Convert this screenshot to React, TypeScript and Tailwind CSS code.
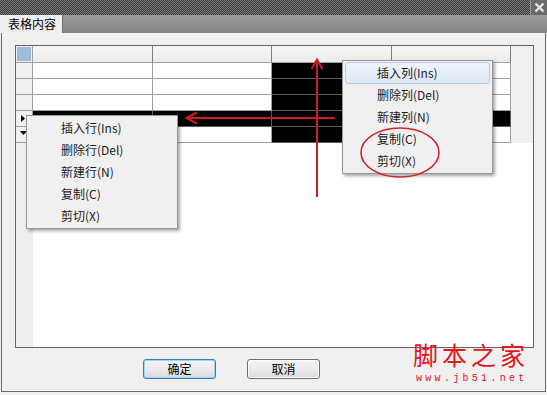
import React from 'react';

const cn = '"Noto Sans CJK SC", "Liberation Sans", sans-serif';

// column widths of the grid, each includes its right border line
const colW = ['w-[120px]', 'w-[119px]', 'w-[120px]', 'w-[119px]'];
const rows = [0, 1, 2, 3, 4];
const selRow = 3;
const selCol = 2;

function RowMarker({ row }: { row: number }) {
  if (row === 3) {
    return (
      <svg width="5" height="7" viewBox="0 0 5 7" className="ml-[5px] mt-[4px]">
        <path d="M0 0 L4 3.5 L0 7 Z" fill="#000" />
      </svg>
    );
  }
  if (row === 4) {
    return (
      <svg width="7" height="5" viewBox="0 0 7 5" className="ml-[4px] mt-[4px]">
        <path d="M0 0 L7 0 L3.5 4 Z" fill="#000" />
      </svg>
    );
  }
  return null;
}

function Grid() {
  return (
    <div className="ml-[13px] w-[519px] h-[303px] border border-[#646464] bg-white flex flex-col">
      {/* header */}
      <div className="flex h-[17px] shrink-0">
        <div className="w-[17px] h-full border-r border-b border-[#a0a0a0] bg-[#f0f0f0] pl-px pt-px">
          <div className="w-[14px] h-[14px] bg-[#9cbcdb]" />
        </div>
        {colW.map((w, i) => (
          <div
            key={i}
            className={`${w} h-full border-r border-b border-r-[#7c7c7c] border-b-[#a0a0a0] bg-gradient-to-b from-[#f7f7f7] to-[#ebebeb]`}
          />
        ))}
        <div className="flex-1 h-full bg-[#f0f0f0]" />
      </div>
      {/* rows */}
      {rows.map((r) => (
        <div key={r} className="flex h-[16px] shrink-0">
          <div className="w-[17px] h-full border-r border-b border-[#a0a0a0] bg-[#f0f0f0]">
            <RowMarker row={r} />
          </div>
          {colW.map((w, c) => {
            const sel = r === selRow || c === selCol;
            return (
              <div
                key={c}
                className={`${w} h-full border-r border-b ${sel ? 'bg-black border-[#5c5c5c]' : 'bg-white border-[#a0a0a0]'}`}
              />
            );
          })}
          <div className="flex-1 h-full bg-[#f0f0f0]" />
        </div>
      ))}
      {/* empty area below rows */}
      <div className="flex flex-1">
        <div className="w-[17px] h-full bg-[#eeeeee]" />
        <div className="flex-1 h-full bg-white" />
      </div>
    </div>
  );
}

function Menu({ items, className, hot }: { items: string[]; className: string; hot?: number }) {
  return (
    <div
      className={`absolute border border-[#979797] bg-[#f0f0f0] py-[1px] px-[2px] shadow-[2px_2px_3px_rgba(0,0,0,0.35)] ${className}`}
      style={{ fontFamily: cn }}
    >
      {items.map((t, i) => (
        <div
          key={t}
          className={`h-[22px] flex items-center pl-[31px] text-[12px] text-[#1b1b1b] rounded-[3px] border ${
            i === hot ? 'border-[#b3cce8] bg-gradient-to-b from-[#eef4fc] to-[#dde8f6]' : 'border-transparent'
          }`}
        >
          {t}
        </div>
      ))}
    </div>
  );
}

function Button({ label, focus }: { label: string; focus?: boolean }) {
  return (
    <div
      className={`w-[73px] h-[20px] rounded-[3px] border flex items-center justify-center text-[12px] text-black bg-gradient-to-b from-[#f4f4f4] via-[#ebebeb] to-[#d9d9d9] ${
        focus ? 'border-[#3c7fb1] shadow-[inset_0_0_0_1px_#9fd3f4]' : 'border-[#707070] shadow-[inset_0_0_0_1px_#fcfcfc]'
      }`}
      style={{ fontFamily: cn }}
    >
      {label}
    </div>
  );
}

export default function App() {
  return (
    <div className="relative w-[547px] h-[395px] overflow-hidden bg-[#f0f0f0] flex flex-col">
      {/* title bar */}
      <div className="h-[15px] shrink-0 flex justify-end bg-[#5a5a5a] bg-[image:repeating-conic-gradient(#3c3c3c_0_25%,#7a7a7a_0_50%)] bg-[length:2px_2px]">
        <div className="w-[17px] h-full border-l border-[#9a9a9a] bg-[#6a6a6a] flex items-center justify-center">
          <svg width="11" height="11" viewBox="0 0 11 11">
            <path d="M1.5 1.5 L9.5 9.5 M9.5 1.5 L1.5 9.5" stroke="#e6e6e6" strokeWidth="2.4" />
          </svg>
        </div>
      </div>
      {/* tab strip */}
      <div className="h-[18px] shrink-0 flex bg-gradient-to-b from-[#9a9a9a] to-[#858585]">
        <div
          className="w-[63px] h-full bg-[#eeeeee] border-r border-[#6e6e6e] flex items-center pl-[8px] text-[12px] text-black"
          style={{ fontFamily: cn }}
        >
          表格内容
        </div>
      </div>
      {/* body */}
      <div className="ml-px w-[545px] h-[359px] border-x border-b border-[#6b6b6b] pt-[12px]">
        <Grid />
        <div className="flex gap-[31px] ml-[141px] mt-[11px]">
          <Button label="确定" focus />
          <Button label="取消" />
        </div>
      </div>

      {/* context menus */}
      <Menu
        className="left-[26px] top-[115px] w-[152px]"
        items={['插入行(Ins)', '删除行(Del)', '新建行(N)', '复制(C)', '剪切(X)']}
      />
      <Menu
        className="left-[342px] top-[60px] w-[151px]"
        hot={0}
        items={['插入列(Ins)', '删除列(Del)', '新建列(N)', '复制(C)', '剪切(X)']}
      />

      {/* annotations */}
      <svg className="absolute inset-0 pointer-events-none" width="547" height="395" viewBox="0 0 547 395">
        <g stroke="#cc1c24" strokeWidth="2" fill="none">
          <path d="M317 197 L317 60" />
          <path d="M311.5 69 L317 59.5 L322.5 69" />
          <path d="M335 118 L187 118" />
          <path d="M197 112.5 L186.5 118 L197 123.5" />
        </g>
        <ellipse cx="400" cy="152.5" rx="39" ry="24.5" stroke="#d0242c" strokeWidth="1.6" fill="none" />
      </svg>

      {/* watermark */}
      <div className="absolute left-[413px] top-[342px] flex flex-col items-start">
        <div className="text-[25px] leading-[25px] text-[#e3141b] tracking-[4px]" style={{ fontFamily: cn }}>
          脚本之家
        </div>
        <div
          className="ml-[3px] mt-[7px] text-[10px] leading-[10px] text-[#e3141b] tracking-[3.3px]"
          style={{ fontFamily: '"Liberation Mono", monospace' }}
        >
          www.jb51.net
        </div>
      </div>
    </div>
  );
}
